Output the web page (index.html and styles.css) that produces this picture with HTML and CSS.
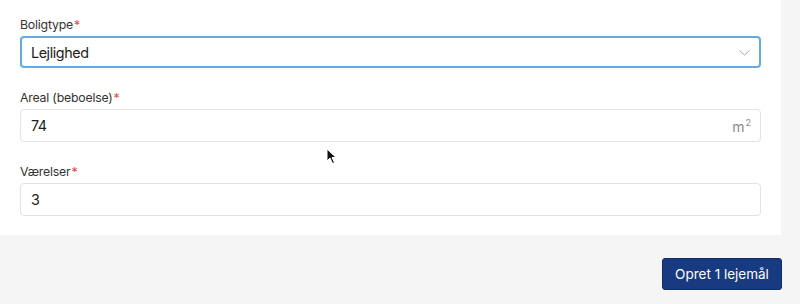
FILE: index.html
```html
<!DOCTYPE html>
<html lang="da">
<head>
<meta charset="utf-8">
<link rel="stylesheet" href="styles.css">
</head>
<body>
<div class="page">
  <div class="card">
    <div class="field">
      <label class="label">Boligtype<span class="req">*</span></label>
      <div class="input select focused">
        <span class="value">Lejlighed</span>
        <svg class="chev" width="11" height="6" viewBox="0 0 11 6"><path d="M0.5 0.5 L5.5 5 L10.5 0.5" fill="none" stroke="#a9a9a9" stroke-width="1"/></svg>
      </div>
    </div>
    <div class="field">
      <label class="label">Areal (beboelse)<span class="req">*</span></label>
      <div class="input">
        <span class="value">74</span>
        <span class="unit">m<sup>2</sup></span>
      </div>
    </div>
    <div class="field">
      <label class="label">Værelser<span class="req">*</span></label>
      <div class="input">
        <span class="value">3</span>
      </div>
    </div>
  </div>
  <div class="actions">
    <button class="btn">Opret 1 lejemål</button>
  </div>
  <svg class="cursor" width="12" height="17" viewBox="0 0 12 17"><path d="M1 1 L1 13 L4 10 L6.5 15.5 L8.5 14.5 L6 9.5 L10 9.5 Z" fill="#111" stroke="#fff" stroke-width="1"/></svg>
</div>
</body>
</html>
```
FILE: styles.css
```css
* { box-sizing: border-box; }
html, body { margin: 0; padding: 0; }
body {
  background: #f5f5f5;
  font-family: "Inter", "Noto Sans", sans-serif;
  color: #2b2b2b;
  width: 800px;
  height: 304px;
  overflow: hidden;
}
.page { position: relative; height: 304px; }
.card {
  background: #fff;
  width: 781px;
  padding: 18px 20px 19px 20px;
  display: flex;
  flex-direction: column;
  gap: 23px;
}
.field { display: flex; flex-direction: column; gap: 4px; }
.label {
  font-size: 12.3px;
  line-height: 14px;
  color: #333;
  letter-spacing: -0.2px;
}
.req { color: #e04545; margin-left: 1px; }
.input {
  height: 33px;
  border: 1px solid #e3e3e3;
  border-radius: 4px;
  display: flex;
  align-items: center;
  padding: 0 9px 0 10px;
  font-size: 14.3px;
  letter-spacing: -0.4px;
  color: #222;
}
.input.focused { border: 2px solid #62ace0; padding-left: 9px; height: 32px; }
.value { flex: 1; }
.chev { margin-top: 1px; }
.unit { color: #8a8a8a; font-size: 14px; letter-spacing: 0; }
.unit sup { font-size: 9px; vertical-align: 6px; margin-left: 1px; }
.actions {
  display: flex;
  justify-content: flex-end;
  padding: 23px 18px 0 0;
}
.btn {
  background: #173a80;
  color: #fff;
  border: 1px solid #0f2d68;
  border-radius: 3px;
  height: 32px;
  width: 120px;
  font-family: "Inter", "Noto Sans", sans-serif;
  font-size: 13.5px;
  padding: 0;
}
.cursor { position: absolute; left: 326px; top: 148px; }
```
